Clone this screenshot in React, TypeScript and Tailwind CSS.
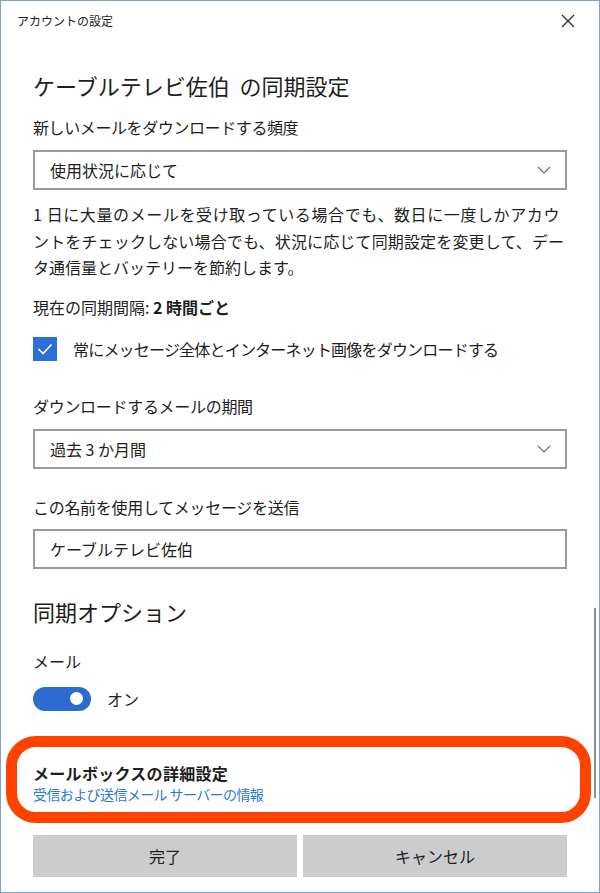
import React from "react";

function Chevron() {
  return (
    <svg width="14" height="8" viewBox="0 0 14 8" fill="none">
      <path d="M1 1L7 7L13 1" stroke="#6b6b6b" strokeWidth="1.1" />
    </svg>
  );
}

function Select({ value }: { value: string }) {
  return (
    <div className="h-[40px] border-2 border-[#9a9a9a] flex items-center justify-between pl-[15px] pr-[14px]">
      <span className="text-[16px] leading-[22px]">{value}</span>
      <Chevron />
    </div>
  );
}

export default function App() {
  return (
    <div className="w-[600px] h-[893px] bg-white font-['Noto_Sans_CJK_JP',sans-serif] text-[#1e1e1e]">
      <div className="relative w-full h-full border border-[#7e9fd3] flex flex-col">
        <div className="h-[40px] flex items-center justify-between pl-[16px] pr-[24px]">
          <span className="text-[12px] leading-[16px]">アカウントの設定</span>
          <svg width="14" height="14" viewBox="0 0 14 14">
            <path d="M1 1L13 13M13 1L1 13" stroke="#2b2b2b" strokeWidth="1.3" />
          </svg>
        </div>
        <div className="flex flex-col px-[32px]">
          <h1 className="mt-[29px] text-[22px] leading-[30px] font-normal">ケーブルテレビ佐伯&nbsp;&nbsp;の同期設定</h1>
          <div className="mt-[16px] text-[16px] leading-[22px] tracking-[-0.4px]">新しいメールをダウンロードする頻度</div>
          <div className="mt-[12px]">
            <Select value="使用状況に応じて" />
          </div>
          <p className="mt-[11px] text-[16px] leading-[26.5px]">
            <span className="block tracking-[0.6px]">1 日に大量のメールを受け取っている場合でも、数日に一度しかアカウ</span>
            <span className="block tracking-[0.15px]">ントをチェックしない場合でも、状況に応じて同期設定を変更して、デー</span>
            <span className="block">タ通信量とバッテリーを節約します。</span>
          </p>
          <div className="mt-[15px] text-[16px] leading-[22px]">
            現在の同期間隔: <span className="font-semibold">2 時間ごと</span>
          </div>
          <div className="mt-[19px] flex items-center gap-[16px]">
            <div className="w-[24px] h-[24px] bg-[#2d6fd6] flex items-center justify-center">
              <svg width="16" height="12" viewBox="0 0 16 12" fill="none">
                <path d="M1.5 6L6 10.5L14.5 1.5" stroke="white" strokeWidth="1.6" />
              </svg>
            </div>
            <span className="text-[16px] leading-[22px] tracking-[-0.8px]">常にメッセージ全体とインターネット画像をダウンロードする</span>
          </div>
          <div className="mt-[34px] text-[16px] leading-[22px] tracking-[-0.3px]">ダウンロードするメールの期間</div>
          <div className="mt-[12px]">
            <Select value="過去 3 か月間" />
          </div>
          <div className="mt-[27px] text-[16px] leading-[22px] tracking-[-0.3px]">この名前を使用してメッセージを送信</div>
          <div className="mt-[11px] h-[40px] border-2 border-[#9a9a9a] flex items-center pl-[15px]">
            <span className="text-[16px] leading-[22px]">ケーブルテレビ佐伯</span>
          </div>
          <h2 className="mt-[27px] text-[22px] leading-[30px] font-normal">同期オプション</h2>
          <div className="mt-[24px] text-[16px] leading-[22px]">メール</div>
          <div className="mt-[15px] flex items-center gap-[16px]">
            <div className="w-[58px] h-[24px] rounded-full bg-[#2b6bd2] flex items-center justify-end pr-[8px]">
              <div className="w-[13px] h-[13px] rounded-full bg-white" />
            </div>
            <span className="text-[16px] leading-[22px]">オン</span>
          </div>
          <div className="mt-[25px] -ml-[27px] -mr-[24px] border-[11px] border-[#ff4200] rounded-[30px] pl-[16px] pr-[13px] pt-[15px] pb-[8px]">
            <div className="text-[16px] leading-[22px] font-bold tracking-[0.3px]">メールボックスの詳細設定</div>
            <div className="text-[14px] leading-[20px] text-[#2d7ad6] tracking-[-0.6px]">受信および送信メール サーバーの情報</div>
          </div>
          <div className="mt-[12px] grid grid-cols-2 gap-[6px]">
            <div className="h-[42px] bg-[#cccccc] flex items-center justify-center text-[16px]">完了</div>
            <div className="h-[42px] bg-[#cccccc] flex items-center justify-center text-[16px]">キャンセル</div>
          </div>
        </div>
        <div className="absolute right-[3px] top-[607px] w-[2px] h-[190px] bg-[#8c8c8c]" />
      </div>
    </div>
  );
}
